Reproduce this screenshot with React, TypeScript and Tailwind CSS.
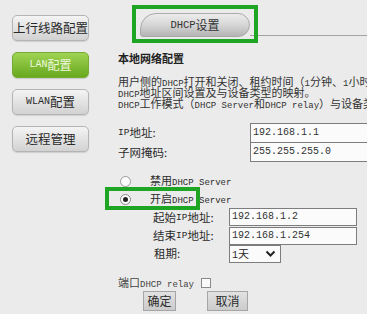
import React from "react";

const cjk = "font-['Noto_Sans_CJK_SC',sans-serif]";
const A = ({ children, size = "text-[9px]" }: { children: React.ReactNode; size?: string }) => (
  <span className={`font-['Liberation_Mono','Noto_Sans_CJK_SC',monospace] leading-none ${size}`}>{children}</span>
);

function SideBtn({ children, active }: { children: React.ReactNode; active?: boolean }) {
  return (
    <div
      className={
        active
          ? "w-[77px] h-[26px] rounded-[5px] border border-[#78ad34] bg-gradient-to-b from-[#9fd452] to-[#68a81c] text-[#eef8dc] flex items-center justify-center text-[12px] leading-none shadow-[0_1px_1px_rgba(0,0,0,0.15)]"
          : "w-[77px] h-[26px] rounded-[5px] border border-[#b4b4b4] bg-gradient-to-b from-[#f4f4f4] to-[#d2d2d2] text-[#2a2a2a] flex items-center justify-center text-[12.5px] leading-none shadow-[0_1px_1px_rgba(0,0,0,0.12)]"
      }
    >
      {children}
    </div>
  );
}

function Input({ value, className }: { value: string; className: string }) {
  return (
    <div className={`border border-[#7d7d7d] bg-[#fbfbfb] flex items-center pl-[2px] ${className}`}>
      <span className="font-['Liberation_Mono',monospace] text-[10px] text-[#333] leading-none">{value}</span>
    </div>
  );
}

export default function App() {
  return (
    <div className={`relative w-[367px] h-[314px] overflow-hidden bg-[#ebebeb] flex text-[#2b2b2b] ${cjk}`}>
      <aside className="w-[118px] shrink-0 pl-[12px] pt-[15px] flex flex-col gap-[11px]">
        <SideBtn>上行线路配置</SideBtn>
        <SideBtn active>
          <A size="text-[10px]">LAN</A>配置
        </SideBtn>
        <SideBtn>
          <A size="text-[10px]">WLAN</A>配置
        </SideBtn>
        <SideBtn>远程管理</SideBtn>
      </aside>

      <main className="flex-1 min-w-0 flex flex-col">
        <div className="pt-[13px] flex items-end">
          <div className="ml-[22px] w-[110px] h-[24px] shrink-0 rounded-tl-[16px] rounded-bl-[3px] rounded-r-[12px] border border-[#a9a9a9] bg-gradient-to-b from-[#ececec] via-[#d6d6d6] to-[#b4b4b4] flex items-center justify-center text-[12px] text-[#333] leading-none">
            <A size="text-[10.5px]">DHCP</A>设置
          </div>
          <div className="flex-1 h-[1px] bg-[#a3a3a3] mb-[1px]" />
        </div>

        <div className="mt-[15px] h-[12px] leading-[12px] text-[11px] font-bold text-[#222] whitespace-nowrap">本地网络配置</div>

        <div className="mt-[12px] text-[11px] leading-none text-[#333] flex flex-col">
          <div className="h-[11px] flex items-baseline whitespace-nowrap">
            用户侧的<A>DHCP</A>打开和关闭、租约时间（<A>1</A>分钟、<A>1</A>小时、<A>1</A>天
          </div>
          <div className="h-[11px] flex items-baseline whitespace-nowrap">
            <A>DHCP</A>地址区间设置及与设备类型的映射。
          </div>
          <div className="h-[11px] flex items-baseline whitespace-nowrap">
            <A>DHCP</A>工作模式（<A>DHCP Server</A>和<A>DHCP relay</A>）与设备类型的映射
          </div>
        </div>

        <div className="mt-[14px] flex">
          <div className="w-[132px] shrink-0 flex flex-col text-[11.5px] leading-none">
            <div className="h-[20px] flex items-center"><A size="text-[9.5px]">IP</A>地址:</div>
            <div className="h-[19px] flex items-center">子网掩码:</div>
          </div>
          <div className="flex flex-col">
            <Input value="192.168.1.1" className="w-[140px] h-[20px]" />
            <Input value="255.255.255.0" className="w-[140px] h-[19px] border-t-0" />
          </div>
        </div>

        <div className="mt-[10px] flex flex-col text-[11px] leading-none">
          <div className="h-[18px] flex items-center pl-[2px]">
            <span className="w-[11px] h-[11px] rounded-full border border-[#9a9a9a] bg-[#fdfdfd] shrink-0" />
            <span className="ml-[19px] whitespace-nowrap flex items-baseline">禁用<A>DHCP Server</A></span>
          </div>
          <div className="h-[18px] flex items-center pl-[2px]">
            <span className="w-[11px] h-[11px] rounded-full border border-[#8a8a8a] bg-[#fdfdfd] shrink-0 flex items-center justify-center">
              <span className="w-[5px] h-[5px] rounded-full bg-[#222]" />
            </span>
            <span className="ml-[19px] whitespace-nowrap flex items-baseline">开启<A>DHCP Server</A></span>
          </div>
        </div>

        <div className="flex pl-[35px] text-[11.5px] leading-none">
          <div className="w-[76px] shrink-0 flex flex-col">
            <div className="h-[19px] flex items-center">起始<A size="text-[9.5px]">IP</A>地址:</div>
            <div className="h-[18px] flex items-center">结束<A size="text-[9.5px]">IP</A>地址:</div>
            <div className="h-[18px] flex items-center pl-[1px]">租期:</div>
          </div>
          <div className="flex flex-col">
            <Input value="192.168.1.2" className="w-[128px] h-[18px]" />
            <Input value="192.168.1.254" className="w-[128px] h-[18px] mt-[1px]" />
            <div className="w-[52px] h-[18px] border border-[#7d7d7d] bg-[#fbfbfb] flex items-center justify-between pl-[2px] pr-[4px]">
              <span className="text-[11px] leading-none flex items-baseline"><A size="text-[10px]">1</A>天</span>
              <svg width="11" height="8" viewBox="0 0 11 8">
                <path d="M1.5 1.5 L5.5 5.5 L9.5 1.5" fill="none" stroke="#222" strokeWidth="2" />
              </svg>
            </div>
          </div>
        </div>

        <div className="mt-[14px] h-[12px] flex items-center text-[11px] leading-none">
          <span className="w-[83px] shrink-0 whitespace-nowrap text-[#444] flex items-baseline">端口<A>DHCP relay</A></span>
          <span className="w-[10px] h-[10px] border border-[#8a8a8a] bg-[#fafafa]" />
        </div>

        <div className="mt-[2px] flex pl-[25px] text-[12px] leading-none">
          <div className="w-[33px] h-[20px] border border-[#a5a5a5] bg-gradient-to-b from-[#e2e2e2] to-[#cbcbcb] flex items-center justify-center">确定</div>
          <div className="ml-[31px] w-[41px] h-[20px] border border-[#a5a5a5] bg-gradient-to-b from-[#e2e2e2] to-[#cbcbcb] flex items-center justify-center">取消</div>
        </div>
      </main>

      <div className="absolute left-[132px] top-[5px] w-[126px] h-[38px] border-[4px] border-[#1fa524] pointer-events-none" />
      <div className="absolute left-[105px] top-[187px] w-[95px] h-[23px] border-[4px] border-[#1fa524] pointer-events-none" />
    </div>
  );
}
